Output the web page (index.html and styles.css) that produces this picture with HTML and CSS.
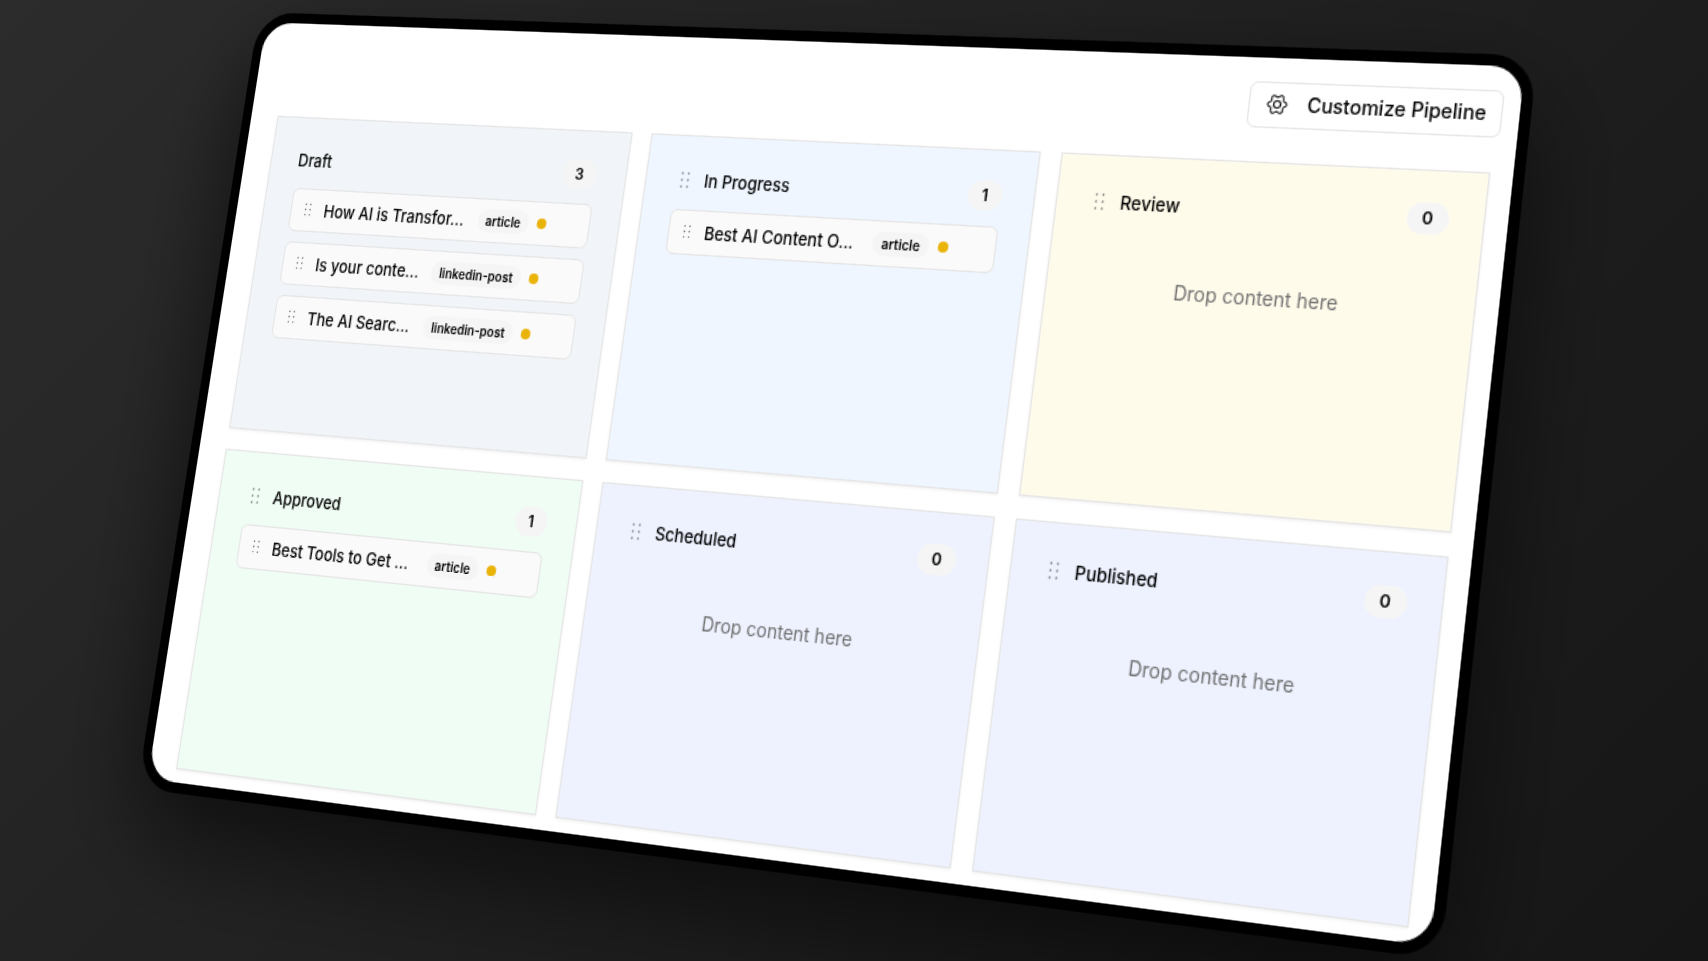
FILE: index.html
```html
<!DOCTYPE html>
<html lang="en">
<head>
<meta charset="utf-8">
<title>Content Pipeline</title>
<link rel="stylesheet" href="styles.css">
</head>
<body>
<svg class="defs" aria-hidden="true">
  <symbol id="grip" viewBox="0 0 16 16">
    <g fill="currentColor"><circle cx="5.5" cy="3" r=".8"/><circle cx="10.5" cy="3" r=".8"/><circle cx="5.5" cy="8" r=".8"/><circle cx="10.5" cy="8" r=".8"/><circle cx="5.5" cy="13" r=".8"/><circle cx="10.5" cy="13" r=".8"/></g>
  </symbol>
  <path id="lobe" d="M18.500 8.200C19.200 9.600 22.500 9 22.500 12S19.200 14.400 18.500 15.800"/>
</svg>
<main class="device">
  <header class="toolbar">
    <button class="customize" type="button">
      <svg class="gear" viewBox="0 0 24 24" aria-hidden="true">
        <use href="#lobe"/>
        <use href="#lobe" transform="rotate(60 12 12)"/>
        <use href="#lobe" transform="rotate(120 12 12)"/>
        <use href="#lobe" transform="rotate(180 12 12)"/>
        <use href="#lobe" transform="rotate(240 12 12)"/>
        <use href="#lobe" transform="rotate(300 12 12)"/>
        <circle cx="12" cy="12" r="3.800"/>
      </svg>
      <span>Customize Pipeline</span>
    </button>
  </header>
  <div class="board">
    <section class="column draft">
      <header class="column-head"><h2>Draft</h2><span class="count">3</span></header>
      <ul class="cards">
        <li class="card"><svg class="grip"><use href="#grip"/></svg><span class="card-title">How AI is Transfor...</span><span class="tag">article</span><span class="dot"></span></li>
        <li class="card"><svg class="grip"><use href="#grip"/></svg><span class="card-title">Is your conte...</span><span class="tag">linkedin-post</span><span class="dot"></span></li>
        <li class="card"><svg class="grip"><use href="#grip"/></svg><span class="card-title">The AI Searc...</span><span class="tag">linkedin-post</span><span class="dot"></span></li>
      </ul>
    </section>
    <section class="column progress">
      <header class="column-head"><svg class="grip"><use href="#grip"/></svg><h2>In Progress</h2><span class="count">1</span></header>
      <ul class="cards">
        <li class="card"><svg class="grip"><use href="#grip"/></svg><span class="card-title">Best AI Content O...</span><span class="tag">article</span><span class="dot"></span></li>
      </ul>
    </section>
    <section class="column review">
      <header class="column-head"><svg class="grip"><use href="#grip"/></svg><h2>Review</h2><span class="count">0</span></header>
      <p class="empty">Drop content here</p>
    </section>
    <section class="column approved">
      <header class="column-head"><svg class="grip"><use href="#grip"/></svg><h2>Approved</h2><span class="count">1</span></header>
      <ul class="cards">
        <li class="card"><svg class="grip"><use href="#grip"/></svg><span class="card-title">Best Tools to Get ...</span><span class="tag">article</span><span class="dot"></span></li>
      </ul>
    </section>
    <section class="column scheduled">
      <header class="column-head"><svg class="grip"><use href="#grip"/></svg><h2>Scheduled</h2><span class="count">0</span></header>
      <p class="empty">Drop content here</p>
    </section>
    <section class="column published">
      <header class="column-head"><svg class="grip"><use href="#grip"/></svg><h2>Published</h2><span class="count">0</span></header>
      <p class="empty">Drop content here</p>
    </section>
  </div>
</main>
</body>
</html>
```
FILE: styles.css
```css
* { box-sizing: border-box; }

body {
  margin: 0;
  min-height: 100vh;
  overflow: hidden;
  background: linear-gradient(135deg, #2c2c2c 0%, #202020 50%, #161616 100%);
  color: #020202;
  font-family: Inter, "Noto Sans", sans-serif;
}

.defs {
  position: absolute;
  width: 0;
  height: 0;
}

/* The board is drawn flat and tilted as one plane. */
.device {
  width: calc(60vw + 2px);
  padding: 17px 16px 10px 24px;
  border: 8px solid #000;
  border-radius: 32px;
  background: #fff;
  box-shadow: 0 32px 80px rgba(0, 0, 0, .6);
  transform-origin: 0 0;
  transform: matrix3d(1.04131, 0.0350717, 0, -0.000132453, -0.206953, 1.238602, 0, -0.0000480873, 0, 0, 1, 0, 259.076, 12.0655, 0, 1);
}

.toolbar {
  display: flex;
  justify-content: flex-end;
  margin: 0 -4px 24px 0;
}

.customize {
  display: flex;
  align-items: center;
  gap: 14px;
  height: 33px;
  padding: 0 10px 1px 12px;
  border: 1px solid #e5e5e5;
  border-radius: 6px;
  background: #fff;
  color: inherit;
  font: 500 14px/20px Inter, "Noto Sans", sans-serif;
}

.gear {
  width: 16px;
  height: 16px;
  fill: none;
  stroke: currentColor;
  stroke-width: 1.5;
  stroke-linejoin: round;
}

.board {
  display: grid;
  grid-template-columns: repeat(3, 1fr);
  gap: 16px;
}

.column {
  min-height: 246px;
  padding: 22px 24px 24px;
  border: 1px solid #e5e5e5;
  box-shadow: 0 1px 2px rgba(0, 0, 0, .06);
}

.draft { background: #f1f5f9; }
.progress { background: #eff6ff; }
.review { background: #fffbeb; }
.approved { background: #f0fdf4; }
.scheduled, .published { background: #eef2ff; }

.column-head {
  display: flex;
  align-items: center;
  gap: 8px;
  height: 22px;
  margin-bottom: 11px;
}

.column-head h2 {
  margin: 0;
  padding-bottom: 1px;
  font-size: 13px;
  line-height: 20px;
  font-weight: 500;
}

.grip {
  flex: none;
  width: 16px;
  height: 16px;
  color: #666;
}

.count {
  margin-left: auto;
  padding: 0 11px;
  border-radius: 11px;
  background: #f5f5f5;
  font-size: 12px;
  line-height: 22px;
  font-weight: 600;
}

.cards {
  display: grid;
  gap: 8px;
  margin: 0;
  padding: 0;
  list-style: none;
}

.card {
  display: flex;
  align-items: center;
  gap: 6px;
  height: 34px;
  padding: 0 36px 1px 8px;
  border: 1px solid #e5e5e5;
  border-radius: 6px;
  background: #fafafa;
}

.card .grip {
  width: 13px;
  height: 13px;
}

.card-title {
  flex: 1;
  padding-left: 2px;
  font-size: 13px;
  line-height: 20px;
  font-weight: 500;
  white-space: nowrap;
}

.tag {
  padding: 0 7px;
  border-radius: 9px;
  background: #f5f5f5;
  font-size: 10px;
  line-height: 18px;
  font-weight: 600;
  white-space: nowrap;
}

.dot {
  width: 8px;
  height: 8px;
  margin-left: 1px;
  border-radius: 50%;
  background: #eab308;
}

.empty {
  margin: 0;
  padding: 30px 0;
  color: #707070;
  font-size: 14px;
  line-height: 20px;
  text-align: center;
}
```
